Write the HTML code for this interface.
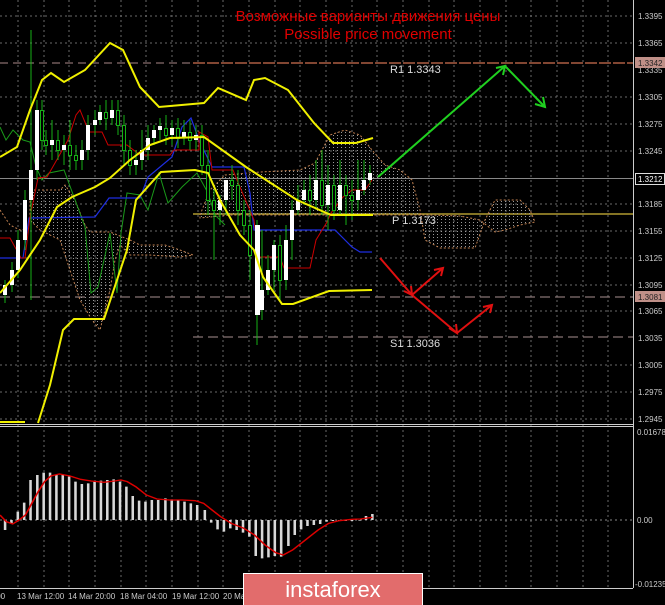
<!DOCTYPE html>
<html><head><meta charset="utf-8"><style>
html,body{margin:0;padding:0;background:#000;width:665px;height:605px;overflow:hidden}
svg{display:block}
text{font-family:"Liberation Sans",sans-serif}
</style></head><body>
<svg width="665" height="605" viewBox="0 0 665 605" xmlns="http://www.w3.org/2000/svg">
<defs>
<pattern id="dots" width="4" height="3" patternUnits="userSpaceOnUse">
<rect x="1" y="0" width="1" height="1" fill="#999"/>
</pattern>
</defs>
<rect width="665" height="605" fill="#000"/>
<g stroke="#6a6a6a" stroke-width="1" stroke-dasharray="2,3" fill="none">
<path d="M18,0V588M44,0V588M69,0V588M95,0V588M121,0V588M146,0V588M172,0V588M198,0V588M223,0V588M249,0V588M275,0V588M300,0V588M326,0V588M352,0V588M377,0V588M403,0V588M429,0V588M454,0V588M480,0V588M506,0V588M531,0V588M557,0V588M583,0V588M608,0V588"/>
<path d="M0,16H633M0,43H633M0,97H633M0,124H633M0,151H633M0,204H633M0,231H633M0,258H633M0,285H633M0,311H633M0,365H633M0,392H633M0,419H633"/>
</g>
<path d="M633.5,0V588M0,424.5H633M0,588.5H633" stroke="#ccc" stroke-width="1"/>
<path d="M0,426.5H633" stroke="#ccc" stroke-width="1"/>
<path d="M0,63H193" stroke="#a88" stroke-dasharray="8,5"/>
<path d="M193,63H633" stroke="#d07050" stroke-width="1.2" stroke-dasharray="12,2"/>
<path d="M0,297H633" stroke="#a89090" stroke-dasharray="10,5"/>
<path d="M193,337H633" stroke="#a89090" stroke-dasharray="10,5"/>
<path d="M0,178.5H633" stroke="#888"/>
<path d="M193,214H633" stroke="#b09a30" stroke-width="1.5"/>
<polygon points="200,215 210,190 225,175 260,172 300,170 315,163 330,135 345,130 360,135 372,150 385,165 400,170 412,180 420,210 425,240 440,248 475,248 485,220 495,200 520,200 530,210 535,222 520,225 505,230 495,232 480,220 460,216 430,215 400,215 372,215 340,215 300,215 260,215 230,215 200,218" fill="url(#dots)" stroke="#c08050" stroke-dasharray="2,2" stroke-width="1"/>
<polygon points="30,190 60,190 65,185 75,200 85,225 90,232 110,232 130,240 140,245 165,245 180,250 193,255 180,257 150,255 130,255 120,245 115,260 110,290 100,330 92,320 80,300 70,270 60,240 40,230 30,220" fill="url(#dots)" stroke="#c08050" stroke-dasharray="2,2" stroke-width="1"/>
<polyline points="0,210 10,225 20,230 30,228" fill="none" stroke="#c08050" stroke-dasharray="2,2"/>
<polyline points="0,127 6,140 13,130 23,140 30,142 36,167 42,180 49,173 64,170 74,197 85,227 91,293 98,287 110,233 117,293 121,233 127,193 140,195 148,210 159,173 168,203 182,187 197,173 208,193 215,215 225,225" fill="none" stroke="#1a9a1a" stroke-width="1"/>
<polyline points="0,258 23,258 29,218 95,217 109,198 140,198 148,177 172,157 182,127 191,118 199,140 212,167 244,167 250,193 254,230 335,230 352,247 360,252 372,252" fill="none" stroke="#1e2ee0" stroke-width="1.2"/>
<polyline points="0,238 10,238 21,258 25,258 30,217 38,178 47,177 55,163 68,140 76,115 80,110 89,132 102,132 108,145 127,145 140,155 170,155 174,150 199,150 199,132 208,137 212,170 233,170 237,180 254,220 259,257 280,257 284,268 310,268 316,240 327,222 331,213 343,197 352,190 365,190 372,180" fill="none" stroke="#c00" stroke-width="1"/>
<path stroke="#16b016" stroke-width="1" fill="none" d="M5,280V303M12,262V292M18,230V278M25,190V250M31,30V300M37,100V180M42,100V150M46,130V155M52,120V160M58,130V160M64,135V165M70,120V170M76,145V170M82,140V170M88,115V160M95,110V135M100,105V125M106,100V130M112,100V125M118,100V135M124,115V165M130,140V175M136,150V175M142,130V170M148,125V160M154,125V145M160,118V140M166,115V145M172,120V145M178,118V148M184,120V145M190,120V150M196,125V150M202,125V175M208,150V215M214,190V260M220,195V225M226,185V215M232,165V200M238,170V225M244,200V235M250,210V280M257,220V345M262,230V320M268,255V295M274,240V290M280,235V300M286,225V290M292,200V260M298,185V215M304,180V205M310,175V215M316,160V210M322,150V215M328,165V230M334,175V220M340,160V215M346,175V225M352,180V220M358,160V210M364,160V195M370,165V185"/>
<g fill="#fff">
<rect x="3" y="285" width="4" height="10"/><rect x="10" y="270" width="4" height="15"/><rect x="16" y="240" width="4" height="30"/><rect x="23" y="200" width="4" height="40"/><rect x="29" y="170" width="4" height="30"/><rect x="35" y="110" width="4" height="60"/><rect x="50" y="140" width="4" height="5"/><rect x="62" y="145" width="4" height="5"/><rect x="80" y="150" width="4" height="10"/><rect x="86" y="125" width="4" height="25"/><rect x="93" y="120" width="4" height="5"/><rect x="98" y="112" width="4" height="8"/><rect x="110" y="110" width="4" height="8"/><rect x="134" y="160" width="4" height="5"/><rect x="140" y="150" width="4" height="10"/><rect x="146" y="138" width="4" height="12"/><rect x="152" y="130" width="4" height="8"/><rect x="158" y="126" width="4" height="4"/><rect x="170" y="128" width="4" height="7"/><rect x="182" y="132" width="4" height="6"/><rect x="194" y="135" width="4" height="5"/><rect x="218" y="200" width="4" height="10"/><rect x="224" y="180" width="4" height="20"/><rect x="255" y="225" width="5" height="90"/><rect x="260" y="290" width="4" height="20"/><rect x="266" y="270" width="4" height="20"/><rect x="272" y="245" width="4" height="25"/><rect x="284" y="240" width="4" height="40"/><rect x="290" y="210" width="4" height="30"/><rect x="296" y="200" width="4" height="10"/><rect x="302" y="190" width="4" height="10"/><rect x="314" y="180" width="4" height="20"/><rect x="326" y="185" width="4" height="20"/><rect x="338" y="185" width="4" height="25"/><rect x="356" y="190" width="4" height="10"/><rect x="362" y="180" width="4" height="10"/><rect x="368" y="173" width="4" height="7"/>
</g>
<g fill="#000" stroke="#16b016" stroke-width="1">
<rect x="40.5" y="110.5" width="3" height="30"/><rect x="44.5" y="140.5" width="3" height="5"/><rect x="56.5" y="140.5" width="3" height="10"/><rect x="68.5" y="145.5" width="3" height="10"/><rect x="74.5" y="155.5" width="3" height="5"/><rect x="104.5" y="112.5" width="3" height="6"/><rect x="116.5" y="110.5" width="3" height="15"/><rect x="122.5" y="125.5" width="3" height="25"/><rect x="128.5" y="150.5" width="3" height="15"/><rect x="164.5" y="128.5" width="3" height="7"/><rect x="176.5" y="128.5" width="3" height="10"/><rect x="188.5" y="132.5" width="3" height="8"/><rect x="200.5" y="135.5" width="3" height="30"/><rect x="206.5" y="165.5" width="3" height="35"/><rect x="212.5" y="200.5" width="3" height="10"/><rect x="230.5" y="180.5" width="3" height="5"/><rect x="236.5" y="185.5" width="3" height="25"/><rect x="242.5" y="210.5" width="3" height="15"/><rect x="248.5" y="225.5" width="3" height="30"/><rect x="278.5" y="245.5" width="3" height="35"/><rect x="308.5" y="190.5" width="3" height="10"/><rect x="320.5" y="180.5" width="3" height="25"/><rect x="332.5" y="185.5" width="3" height="25"/><rect x="344.5" y="185.5" width="3" height="10"/><rect x="350.5" y="195.5" width="3" height="5"/>
</g>
<g fill="none" stroke="#f0f000" stroke-width="2">
<polyline points="0,157 17,147 30,110 42,80 51,73 64,82 85,70 110,43 123,50 140,87 159,107 204,103 218,88 246,100 254,80 265,78 288,90 314,123 333,143 356,143 373,138"/>
<polyline points="0,293 20,270 40,240 57,207 72,197 95,187 110,178 130,160 150,145 170,138 204,137 246,167 297,200 331,215 373,215"/>
<polyline points="38,423 50,385 63,330 74,319 104,319 127,250 136,200 161,172 195,170 208,173 220,200 240,235 254,250 263,277 282,304 293,304 329,291 372,290"/>
<polyline points="0,422 25,422"/>
</g>
<g fill="none" stroke="#20d020" stroke-width="2">
<polyline points="378,177 505,66 545,107"/>
<polyline points="496,68 505,66 503,75"/>
<polyline points="535,104 545,107 543,97"/>
</g>
<g fill="none" stroke="#e01010" stroke-width="2">
<polyline points="380,258 412,295 443,268"/>
<polyline points="412,295 457,333 492,305"/>
<polyline points="404,291 412,295 411,286"/>
<polyline points="434,270 443,268 441,276"/>
<polyline points="449,328 457,333 456,324"/>
<polyline points="483,307 492,305 490,313"/>
</g>
<g font-family="Liberation Mono,monospace" font-size="11" fill="#ddd">
<text x="390" y="73">R1 1.3343</text>
<text x="392" y="224">P 1.3173</text>
<text x="390" y="347">S1 1.3036</text>
</g>
<g fill="#e00000" font-size="15" text-anchor="middle">
<text x="368" y="21">Возможные варианты движения цены</text>
<text x="368" y="39">Possible price movement</text>
</g>
<g font-size="8" fill="#ccc">
<text x="638" y="19">1.3395</text><text x="638" y="46">1.3365</text><text x="638" y="73">1.3335</text><text x="638" y="100">1.3305</text><text x="638" y="127">1.3275</text><text x="638" y="154">1.3245</text><text x="638" y="207">1.3185</text><text x="638" y="234">1.3155</text><text x="638" y="261">1.3125</text><text x="638" y="288">1.3095</text><text x="638" y="314">1.3065</text><text x="638" y="341">1.3035</text><text x="638" y="368">1.3005</text><text x="638" y="395">1.2975</text><text x="638" y="422">1.2945</text>
<text x="637" y="435">0.01678</text><text x="637" y="523">0.00</text><text x="635" y="587">-0.01235</text>
</g>
<rect x="635" y="57" width="30" height="11" fill="#c09088"/>
<text x="638" y="66" font-size="8" fill="#222">1.3342</text>
<rect x="635.5" y="173.5" width="29" height="11" fill="#000" stroke="#ddd"/>
<text x="638" y="182" font-size="8" fill="#fff">1.3212</text>
<rect x="635" y="291" width="30" height="11" fill="#c09088"/>
<text x="638" y="300" font-size="8" fill="#222">1.3081</text>
<path d="M0,520H633" stroke="#888" stroke-dasharray="2,3"/>
<g transform="translate(0,420) scale(0.4241,0.3333)">
<path stroke="#d8d8d8" stroke-width="6" fill="none" d="M12,300V330M27,300V310M42,300V275M57,300V248M72,300V180M88,300V165M103,300V158M118,300V158M133,300V165M148,300V165M163,300V170M178,300V185M193,300V192M208,300V190M223,300V185M238,300V182M253,300V180M268,300V178M283,300V185M298,300V200M313,300V228M328,300V242M343,300V245M358,300V240M373,300V240M390,300V235M405,300V238M420,300V240M435,300V245M450,300V250M465,300V255M483,300V270M498,300V308M513,300V328M528,300V335M543,300V325M558,300V330M573,300V338M588,300V350M603,300V408M618,300V415M633,300V412M648,300V408M663,300V410M680,300V378M695,300V345M710,300V328M725,300V318M740,300V315M755,300V312M770,300V305M785,300V303M800,300V302M815,300V303M830,300V303M848,300V302M863,300V288M878,300V282"/>
<polyline fill="none" stroke="#d00" stroke-width="4" points="0,285 15,305 30,312 45,300 60,285 75,250 90,215 105,185 120,168 140,162 165,168 190,178 215,183 245,187 270,183 285,180 300,185 320,200 345,225 370,237 400,240 430,240 460,242 480,250 500,270 520,290 545,310 575,325 600,345 625,375 650,398 668,405 690,390 720,360 750,330 775,310 800,302 830,298 850,297 878,292"/>
</g>
<g font-size="8" fill="#ccc">
<text x="-6" y="599">:00</text><text x="17" y="599">13 Mar 12:00</text><text x="68" y="599">14 Mar 20:00</text><text x="120" y="599">18 Mar 04:00</text><text x="172" y="599">19 Mar 12:00</text><text x="223" y="599">20 Ma</text>
</g>
<rect x="243.5" y="573.5" width="179" height="32" fill="#e26c6c" stroke="#fff" stroke-width="1"/>
<text x="333" y="597" font-size="22" fill="#fff" text-anchor="middle">instaforex</text>
</svg>
</body></html>
